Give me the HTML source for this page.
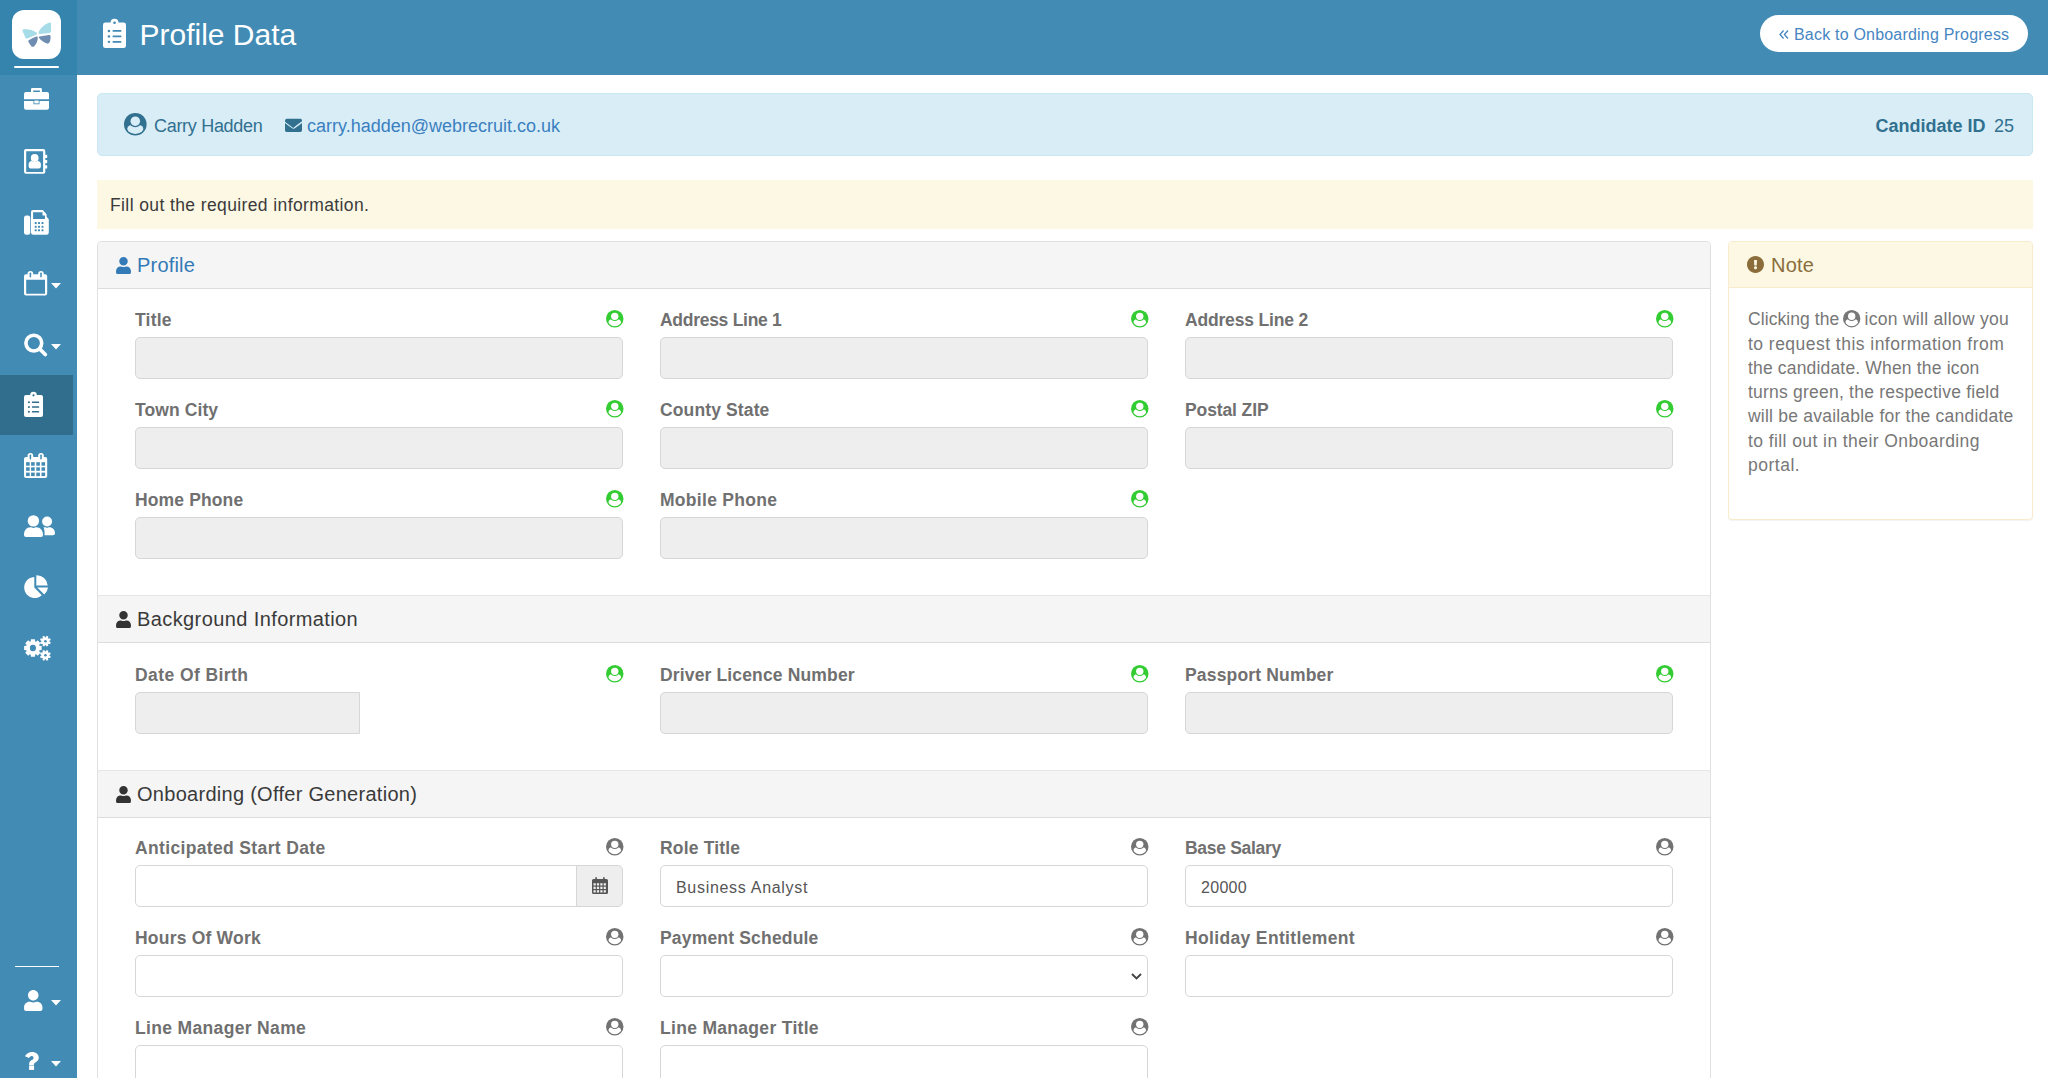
<!DOCTYPE html>
<html><head><meta charset="utf-8">
<style>
html,body{margin:0;padding:0;}
body{width:2048px;height:1078px;overflow:hidden;position:relative;background:#fff;font-family:"Liberation Sans",sans-serif;}
.t{position:absolute;white-space:nowrap;}
.b{position:absolute;box-sizing:border-box;}
.i{position:absolute;overflow:visible;}
</style></head><body>
<div class="b" style="left:0px;top:0px;width:77px;height:1078px;background:#428bb4;"></div>
<div class="b" style="left:0px;top:0px;width:77px;height:75px;background:#3584ae;"></div>
<div class="b" style="left:12px;top:10px;width:49px;height:49px;background:#fff;border-radius:12px;"></div>
<svg class="i" style="left:12px;top:10px;width:49px;height:49px;" viewBox="0 0 49 49"><path d="M11 19.5 C14 18.5 21 19.5 24.5 22.5 C25.5 23.5 25 24.5 23.5 25 L16 28.3 C14.5 29 13.5 28.5 13 27 C12.5 24.5 11 22.5 10.5 21 C10.3 20.2 10.5 19.7 11 19.5Z" fill="#a6dbe8"/><path d="M37.5 12.5 C38.5 12.3 39 13 39 14 C38.8 17 39.5 19.5 39 21.5 C38.8 22.5 38.2 22.8 37.2 22.9 L27.8 23.9 C26.8 24 26.3 23.3 26.6 22.3 C28.5 17.5 33 14 37.5 12.5Z" fill="#a6dbe8"/><path d="M27.5 26.4 L37 24.9 C38 24.8 38.6 25.4 38.6 26.4 C38.6 28.5 38.4 30.5 37.8 31.8 C37.2 33 36.3 33.8 35.2 33.6 C31.5 32.5 28.5 30 27 27.8 C26.6 27 26.8 26.5 27.5 26.4Z" fill="#6f8db1"/><path d="M24.5 26.5 C25.2 26.3 25.8 26.8 25.8 27.6 C25.8 31 24.3 34.5 22.2 36.2 C21.3 37 20 37 19.3 36.2 C18 34.5 17 33 16.4 31.8 C16.1 31 16.4 30.3 17.2 29.9 C19.5 28.5 22 27.3 24.5 26.5Z" fill="#6f8db1"/></svg>
<div class="b" style="left:14px;top:66px;width:45px;height:2px;background:#fff;border-radius:1px;"></div>
<svg class="i" style="left:24px;top:88px;width:25px;height:22px;" viewBox="0 0 25 22"><path d="M8.2 0H16.7A1.2 1.2 0 0 1 17.9 1.2V3.9H23A2 2 0 0 1 25 5.9V11.3H0V5.9A2 2 0 0 1 2 3.9H7V1.2A1.2 1.2 0 0 1 8.2 0ZM9.2 2.6V3.9H15.9V2.6Z" fill="#ffffff"/><path d="M0 13H9.5V16.2H15.5V13H25V19.7A2 2 0 0 1 23 21.7H2A2 2 0 0 1 0 19.7Z" fill="#ffffff"/><rect x="10.3" y="12.6" width="4.4" height="2.8" fill="#ffffff"/></svg>
<svg class="i" style="left:24px;top:149px;width:23px;height:25px;" viewBox="0 0 23 25"><path d="M2 0H19.3a2 2 0 0 1 2 2V22.7a2 2 0 0 1-2 2H2a2 2 0 0 1-2-2V2a2 2 0 0 1 2-2ZM2.2 2.3V22.9H19.1V2.3Z" fill="#ffffff" fill-rule="evenodd"/><rect x="20.5" y="5.8" width="2.7" height="3.2" rx="0.6" fill="#ffffff"/><rect x="20.5" y="11" width="2.7" height="3.2" rx="0.6" fill="#ffffff"/><rect x="20.5" y="16.2" width="2.7" height="3.4" rx="0.6" fill="#ffffff"/><circle cx="10.7" cy="9" r="3.9" fill="#ffffff"/><path d="M4.6 17.3V15.3C4.6 13.2 6 11.9 7.8 11.9C8.6 12.6 9.6 13 10.7 13C11.8 13 12.8 12.6 13.6 11.9C15.5 11.9 16.9 13.2 16.9 15.3V17.3A2.2 2.2 0 0 1 14.7 19.5H6.8A2.2 2.2 0 0 1 4.6 17.3Z" fill="#ffffff"/></svg>
<svg class="i" style="left:24px;top:210px;width:25px;height:25px;" viewBox="0 0 25 25"><rect x="0" y="5.5" width="6.3" height="19.3" rx="2.4" fill="#ffffff"/><path d="M9 0H18.8L22.6 4.3V6.5L23.8 8.3A1.5 1.5 0 0 1 24.8 9.7V22.5a2.3 2.3 0 0 1-2.3 2.3H9.3a2.3 2.3 0 0 1-2.3-2.3V2a2 2 0 0 1 2-2ZM9.1 2.3V8.9H20.9V5.6H18.5V2.3Z" fill="#ffffff" fill-rule="evenodd"/><rect x="10.7" y="12.1" width="2" height="2" rx="0.6" fill="#428bb4"/><rect x="14.0" y="12.1" width="2" height="2" rx="0.6" fill="#428bb4"/><rect x="17.5" y="12.1" width="2" height="2" rx="0.6" fill="#428bb4"/><rect x="10.7" y="15.8" width="2" height="2" rx="0.6" fill="#428bb4"/><rect x="14.0" y="15.8" width="2" height="2" rx="0.6" fill="#428bb4"/><rect x="17.5" y="15.8" width="2" height="2" rx="0.6" fill="#428bb4"/><rect x="10.7" y="19.3" width="2" height="2" rx="0.6" fill="#428bb4"/><rect x="14.0" y="19.3" width="2" height="2" rx="0.6" fill="#428bb4"/><rect x="17.5" y="19.3" width="2" height="2" rx="0.6" fill="#428bb4"/></svg>
<svg class="i" style="left:24px;top:271px;width:23px;height:25px;" viewBox="0 0 23 25"><path d="M2 3.2H21.2a2 2 0 0 1 2 2V22.6a2 2 0 0 1-2 2H2a2 2 0 0 1-2-2V5.2a2 2 0 0 1 2-2ZM2.2 8.8V22.7H21V8.8Z" fill="#ffffff" fill-rule="evenodd"/><rect x="3.6" y="0" width="5.6" height="7.2" rx="2.8" fill="#ffffff"/><rect x="14.2" y="0" width="5.6" height="7.2" rx="2.8" fill="#ffffff"/><rect x="5.65" y="1.5" width="1.5" height="5.1" rx="0.75" fill="#428bb4"/><rect x="16.25" y="1.5" width="1.5" height="5.1" rx="0.75" fill="#428bb4"/></svg>
<svg class="i" style="left:51px;top:283px;width:10px;height:6px;" viewBox="0 0 10 6"><path d="M0 0H10L5 5.5Z" fill="#fff"/></svg>
<svg class="i" style="left:24px;top:333px;width:24px;height:24px;" viewBox="0 0 24 24"><circle cx="9.8" cy="10.1" r="7.9" fill="none" stroke="#ffffff" stroke-width="3.6"/><path d="M15.6 15.9L21.3 21.5" stroke="#ffffff" stroke-width="3.8" stroke-linecap="round"/></svg>
<svg class="i" style="left:51px;top:344px;width:10px;height:6px;" viewBox="0 0 10 6"><path d="M0 0H10L5 5.5Z" fill="#fff"/></svg>
<div class="b" style="left:0px;top:375px;width:73px;height:60px;background:#316e8e;"></div>
<svg class="i" style="left:24px;top:392px;width:19px;height:25px;" viewBox="0 0 19 25"><path d="M2 3.1H6.2A3.3 3.3 0 0 1 12.8 3.1H17a2 2 0 0 1 2 2V23a2 2 0 0 1-2 2H2a2 2 0 0 1-2-2V5.1a2 2 0 0 1 2-2Z" fill="#ffffff"/><circle cx="9.5" cy="3.3" r="1.1" fill="#316e8e"/><circle cx="4.9" cy="10.3" r="1.05" fill="#316e8e"/><rect x="7.9" y="9.55" width="7.3" height="1.5" rx="0.5" fill="#316e8e"/><circle cx="4.9" cy="15.0" r="1.05" fill="#316e8e"/><rect x="7.9" y="14.25" width="7.3" height="1.5" rx="0.5" fill="#316e8e"/><circle cx="4.9" cy="19.700000000000003" r="1.05" fill="#316e8e"/><rect x="7.9" y="18.950000000000003" width="7.3" height="1.5" rx="0.5" fill="#316e8e"/></svg>
<svg class="i" style="left:24px;top:453px;width:23px;height:25px;" viewBox="0 0 23 25"><path d="M2 3.9H21.2a2 2 0 0 1 2 2V23a2 2 0 0 1-2 2H2a2 2 0 0 1-2-2V5.9a2 2 0 0 1 2-2Z" fill="#ffffff"/><rect x="2.1" y="9.2" width="3.6" height="3.5" fill="#428bb4"/><rect x="7.1" y="9.2" width="3.6" height="3.5" fill="#428bb4"/><rect x="12.3" y="9.2" width="3.6" height="3.5" fill="#428bb4"/><rect x="17.5" y="9.2" width="3.6" height="3.5" fill="#428bb4"/><rect x="2.1" y="14.3" width="3.6" height="3.5" fill="#428bb4"/><rect x="7.1" y="14.3" width="3.6" height="3.5" fill="#428bb4"/><rect x="12.3" y="14.3" width="3.6" height="3.5" fill="#428bb4"/><rect x="17.5" y="14.3" width="3.6" height="3.5" fill="#428bb4"/><rect x="2.1" y="19.6" width="3.6" height="3.5" fill="#428bb4"/><rect x="7.1" y="19.6" width="3.6" height="3.5" fill="#428bb4"/><rect x="12.3" y="19.6" width="3.6" height="3.5" fill="#428bb4"/><rect x="17.5" y="19.6" width="3.6" height="3.5" fill="#428bb4"/><rect x="3.6" y="0" width="5.6" height="7.2" rx="2.8" fill="#ffffff"/><rect x="14.2" y="0" width="5.6" height="7.2" rx="2.8" fill="#ffffff"/><rect x="5.65" y="1.5" width="1.5" height="5.1" rx="0.75" fill="#428bb4"/><rect x="16.25" y="1.5" width="1.5" height="5.1" rx="0.75" fill="#428bb4"/></svg>
<svg class="i" style="left:24px;top:515px;width:31px;height:22px;" viewBox="0 0 31 22"><circle cx="9.4" cy="5.9" r="5.7" fill="#ffffff"/><path d="M0 19.9C0 15.5 2.5 12.3 6.5 12.3C7.5 12.3 8 13 9.4 13C10.8 13 11.3 12.3 12.3 12.3C16.3 12.3 19 15.5 19 19.9A2 2 0 0 1 17 21.9H2A2 2 0 0 1 0 19.9Z" fill="#ffffff"/><circle cx="23.1" cy="6.5" r="5.0" fill="#ffffff"/><path d="M19.5 12.5C20 12.3 20.5 12.3 21 12.3C21.8 12.3 22.2 12.8 23.1 12.8C24 12.8 24.4 12.3 25.2 12.3C28.5 12.3 31 14.8 31 18.2A2 2 0 0 1 29 20.2H20.4C20.6 19.5 20.6 18.5 20.6 18C20.6 15.8 20.3 13.8 19.5 12.5Z" fill="#ffffff"/></svg>
<svg class="i" style="left:24px;top:575px;width:24px;height:24px;" viewBox="0 0 24 24"><path d="M10.3 2V12.5L17.8 20.2A10.5 10.5 0 1 1 10.3 2Z" fill="#ffffff"/><path d="M12.3 0.3A11 11 0 0 1 23.7 10.5H12.3Z" fill="#ffffff"/><path d="M13.2 12.5H24A11 11 0 0 1 20.3 19.6Z" fill="#ffffff"/></svg>
<svg class="i" style="left:24px;top:636px;width:28px;height:25px;" viewBox="0 0 28 25"><polygon points="6.66,5.47 6.85,3.24 10.95,3.24 11.14,5.47 11.93,5.80 13.65,4.35 16.55,7.25 15.10,8.97 15.43,9.76 17.66,9.95 17.66,14.05 15.43,14.24 15.10,15.03 16.55,16.75 13.65,19.65 11.93,18.20 11.14,18.53 10.95,20.76 6.85,20.76 6.66,18.53 5.87,18.20 4.15,19.65 1.25,16.75 2.70,15.03 2.37,14.24 0.14,14.05 0.14,9.95 2.37,9.76 2.70,8.97 1.25,7.25 4.15,4.35 5.87,5.80" fill="#ffffff"/><ellipse cx="8.9" cy="12.0" rx="3.05" ry="3.3" fill="#428bb4"/><polygon points="21.88,1.13 22.56,-0.18 24.38,0.58 23.94,1.98 24.62,2.66 26.02,2.22 26.78,4.04 25.47,4.72 25.47,5.68 26.78,6.36 26.02,8.18 24.62,7.74 23.94,8.42 24.38,9.82 22.56,10.58 21.88,9.27 20.92,9.27 20.24,10.58 18.42,9.82 18.86,8.42 18.18,7.74 16.78,8.18 16.02,6.36 17.33,5.68 17.33,4.72 16.02,4.04 16.78,2.22 18.18,2.66 18.86,1.98 18.42,0.58 20.24,-0.18 20.92,1.13" fill="#ffffff"/><ellipse cx="21.4" cy="5.2" rx="1.3" ry="1.3" fill="#428bb4"/><polygon points="21.88,15.23 22.56,13.92 24.38,14.68 23.94,16.08 24.62,16.76 26.02,16.32 26.78,18.14 25.47,18.82 25.47,19.78 26.78,20.46 26.02,22.28 24.62,21.84 23.94,22.52 24.38,23.92 22.56,24.68 21.88,23.37 20.92,23.37 20.24,24.68 18.42,23.92 18.86,22.52 18.18,21.84 16.78,22.28 16.02,20.46 17.33,19.78 17.33,18.82 16.02,18.14 16.78,16.32 18.18,16.76 18.86,16.08 18.42,14.68 20.24,13.92 20.92,15.23" fill="#ffffff"/><ellipse cx="21.4" cy="19.3" rx="1.3" ry="1.3" fill="#428bb4"/></svg>
<div class="b" style="left:14.5px;top:966px;width:44px;height:1px;background:#fff;"></div>
<svg class="i" style="left:24px;top:990px;width:18.5px;height:21px;" viewBox="0 0 448 512"><path d="M224 256c70.7 0 128-57.3 128-128S294.7 0 224 0 96 57.3 96 128s57.3 128 128 128zm89.6 32h-16.7c-22.2 10.2-46.9 16-72.9 16s-50.6-5.8-72.9-16h-16.7C60.2 288 0 348.2 0 422.4V464c0 26.5 21.5 48 48 48h352c26.5 0 48-21.5 48-48v-41.6c0-74.2-60.2-134.4-134.4-134.4z" fill="#ffffff"/></svg>
<svg class="i" style="left:51px;top:1000px;width:10px;height:6px;" viewBox="0 0 10 6"><path d="M0 0H10L5 5.5Z" fill="#fff"/></svg>
<svg class="i" style="left:25px;top:1052px;width:14px;height:18px;" viewBox="0 0 14 18"><path d="M0 4.3C1.3 1.6 3.8 0 7.2 0C10.9 0 13.8 2.3 13.8 5.6C13.8 8.2 12.2 9.5 10.4 10.6C9.4 11.2 8.9 12 8.9 12.8V13.3H4.1V12.5C4.1 10.2 5.2 9 6.6 8.1C7.9 7.3 8.5 6.8 8.5 5.9C8.5 4.9 7.9 4.1 6.8 4.1C5.6 4.1 4.9 4.8 4.1 5.9Z" fill="#ffffff"/><rect x="4.1" y="13.6" width="5" height="4.3" fill="#ffffff"/></svg>
<svg class="i" style="left:51px;top:1061px;width:10px;height:6px;" viewBox="0 0 10 6"><path d="M0 0H10L5 5.5Z" fill="#fff"/></svg>
<div class="b" style="left:77px;top:0px;width:1971px;height:75px;background:#428bb4;"></div>
<svg class="i" style="left:103px;top:19px;width:23px;height:29px;" viewBox="0 0 19 25" preserveAspectRatio="none"><path d="M2 3.1H6.2A3.3 3.3 0 0 1 12.8 3.1H17a2 2 0 0 1 2 2V23a2 2 0 0 1-2 2H2a2 2 0 0 1-2-2V5.1a2 2 0 0 1 2-2Z" fill="#ffffff"/><circle cx="9.5" cy="3.3" r="1.1" fill="#428bb4"/><circle cx="4.9" cy="10.3" r="1.05" fill="#428bb4"/><rect x="7.9" y="9.55" width="7.3" height="1.5" rx="0.5" fill="#428bb4"/><circle cx="4.9" cy="15.0" r="1.05" fill="#428bb4"/><rect x="7.9" y="14.25" width="7.3" height="1.5" rx="0.5" fill="#428bb4"/><circle cx="4.9" cy="19.700000000000003" r="1.05" fill="#428bb4"/><rect x="7.9" y="18.950000000000003" width="7.3" height="1.5" rx="0.5" fill="#428bb4"/></svg>
<div class="t " style="left:139.5px;top:16.60px;font-size:30px;line-height:36px;color:#fff;">Profile Data</div>
<div class="b" style="left:1760px;top:15px;width:268px;height:37px;background:#fff;border-radius:19px;"></div>
<svg class="i" style="left:1779px;top:30px;width:10px;height:9px;" viewBox="0 0 10 9"><path d="M4.6 0.5L1 4.5L4.6 8.5M9 0.5L5.4 4.5L9 8.5" fill="none" stroke="#4686c2" stroke-width="1.3"/></svg>
<div class="t " style="left:1794px;top:24.96px;font-size:16px;line-height:19px;color:#4686c2;letter-spacing:0.2px;">Back to Onboarding Progress</div>
<div class="b" style="left:97px;top:93px;width:1936px;height:63px;background:#d9edf7;border:1px solid #c9e8f2;border-radius:5px;"></div>
<svg class="i" style="left:123.7px;top:112.7px;width:22.6px;height:22.6px;" viewBox="0 0 100 100"><clipPath id="uc1"><circle cx="50" cy="50" r="43"/></clipPath><circle cx="50" cy="50" r="50" fill="#31708f"/><rect x="14" y="53" width="72" height="50" rx="20" fill="#d9edf7" clip-path="url(#uc1)"/><circle cx="50" cy="36" r="27.5" fill="#31708f"/><circle cx="50" cy="36" r="21" fill="#d9edf7"/></svg>
<div class="t " style="left:154px;top:114.96px;font-size:18px;line-height:22px;color:#31708f;letter-spacing:-0.3px;">Carry Hadden</div>
<svg class="i" style="left:285px;top:119px;width:17px;height:13px;" viewBox="0 64 512 384"><path d="M502.3 190.8c3.9-3.1 9.7-.2 9.7 4.7V400c0 26.5-21.5 48-48 48H48c-26.5 0-48-21.5-48-48V195.6c0-5 5.7-7.8 9.7-4.7 22.4 17.4 52.1 39.5 154.1 113.6 21.1 15.4 56.7 47.8 92.2 47.6 35.7.3 72-32.8 92.3-47.6 102-74.1 131.6-96.3 154-113.7zM256 320c23.2.4 56.6-42.4 72.4-53.8 132.7-96.3 142.8-104.7 173.4-128.7 5.8-4.5 9.2-11.5 9.2-18.9v-19c0-26.5-21.5-48-48-48H48C21.5 64 0 85.5 0 112v19c0 7.4 3.4 14.3 9.2 18.9 30.6 23.9 40.7 32.4 173.4 128.7 15.8 11.4 49.2 54.2 72.4 53.8z" fill="#31708f"/></svg>
<div class="t " style="left:307px;top:114.96px;font-size:18px;line-height:22px;color:#3a80bf;">carry.hadden@webrecruit.co.uk</div>
<div class="t" style="right:62.5px;top:114.96px;font-size:18px;line-height:22px;color:#31708f;font-weight:700;">Candidate ID</div>
<div class="t" style="right:34px;top:114.96px;font-size:18px;line-height:22px;color:#31708f;">25</div>
<div class="b" style="left:97px;top:180px;width:1936px;height:49px;background:#fcf8e3;"></div>
<div class="t " style="left:110px;top:194.64px;font-size:17.5px;line-height:21px;color:#3b3b3b;letter-spacing:0.39px;">Fill out the required information.</div>
<div class="b" style="left:97px;top:241px;width:1614px;height:900px;border:1px solid #e0e0e0;border-radius:4px;background:#fff;"></div>
<div class="b" style="left:98px;top:242px;width:1612px;height:47px;background:#f5f5f5;border-bottom:1px solid #dddddd;border-radius:3px 3px 0 0;"></div>
<svg class="i" style="left:116px;top:257px;width:15px;height:17px;" viewBox="0 0 448 512"><path d="M224 256c70.7 0 128-57.3 128-128S294.7 0 224 0 96 57.3 96 128s57.3 128 128 128zm89.6 32h-16.7c-22.2 10.2-46.9 16-72.9 16s-50.6-5.8-72.9-16h-16.7C60.2 288 0 348.2 0 422.4V464c0 26.5 21.5 48 48 48h352c26.5 0 48-21.5 48-48v-41.6c0-74.2-60.2-134.4-134.4-134.4z" fill="#337ab7"/></svg>
<div class="t " style="left:137px;top:253.27px;font-size:20px;line-height:24px;color:#337ab7;letter-spacing:0.2px;">Profile</div>
<div class="b" style="left:97px;top:595px;width:1614px;height:48px;background:#f5f5f5;border-bottom:1px solid #dddddd;border-top:1px solid #e6e6e6;border-radius:3px 3px 0 0;border-left:1px solid #e3e3e3;border-right:1px solid #e3e3e3;"></div>
<svg class="i" style="left:116px;top:611px;width:15px;height:17px;" viewBox="0 0 448 512"><path d="M224 256c70.7 0 128-57.3 128-128S294.7 0 224 0 96 57.3 96 128s57.3 128 128 128zm89.6 32h-16.7c-22.2 10.2-46.9 16-72.9 16s-50.6-5.8-72.9-16h-16.7C60.2 288 0 348.2 0 422.4V464c0 26.5 21.5 48 48 48h352c26.5 0 48-21.5 48-48v-41.6c0-74.2-60.2-134.4-134.4-134.4z" fill="#333333"/></svg>
<div class="t " style="left:137px;top:607.27px;font-size:20px;line-height:24px;color:#3a3a3a;letter-spacing:0.4px;">Background Information</div>
<div class="b" style="left:97px;top:770px;width:1614px;height:48px;background:#f5f5f5;border-bottom:1px solid #dddddd;border-top:1px solid #e6e6e6;border-radius:3px 3px 0 0;border-left:1px solid #e3e3e3;border-right:1px solid #e3e3e3;"></div>
<svg class="i" style="left:116px;top:786px;width:15px;height:17px;" viewBox="0 0 448 512"><path d="M224 256c70.7 0 128-57.3 128-128S294.7 0 224 0 96 57.3 96 128s57.3 128 128 128zm89.6 32h-16.7c-22.2 10.2-46.9 16-72.9 16s-50.6-5.8-72.9-16h-16.7C60.2 288 0 348.2 0 422.4V464c0 26.5 21.5 48 48 48h352c26.5 0 48-21.5 48-48v-41.6c0-74.2-60.2-134.4-134.4-134.4z" fill="#333333"/></svg>
<div class="t " style="left:137px;top:782.27px;font-size:20px;line-height:24px;color:#3a3a3a;letter-spacing:0.28px;">Onboarding (Offer Generation)</div>
<div class="t " style="left:135px;top:310.44px;font-size:17.5px;line-height:21px;color:#707070;font-weight:700;letter-spacing:0.2px;">Title</div>
<svg class="i" style="left:605.85px;top:310.05px;width:17.5px;height:17.5px;" viewBox="0 0 100 100"><clipPath id="uc2"><circle cx="50" cy="50" r="43"/></clipPath><circle cx="50" cy="50" r="50" fill="#33cc33"/><rect x="14" y="53" width="72" height="50" rx="20" fill="#fff" clip-path="url(#uc2)"/><circle cx="50" cy="36" r="27.5" fill="#33cc33"/><circle cx="50" cy="36" r="21" fill="#fff"/></svg>
<div class="b" style="left:135px;top:337px;width:488px;height:42px;background:#eeeeee;border:1px solid #d6d6d6;border-radius:5px;"></div>
<div class="t " style="left:660px;top:310.44px;font-size:17.5px;line-height:21px;color:#707070;font-weight:700;letter-spacing:-0.28px;">Address Line 1</div>
<svg class="i" style="left:1130.85px;top:310.05px;width:17.5px;height:17.5px;" viewBox="0 0 100 100"><clipPath id="uc3"><circle cx="50" cy="50" r="43"/></clipPath><circle cx="50" cy="50" r="50" fill="#33cc33"/><rect x="14" y="53" width="72" height="50" rx="20" fill="#fff" clip-path="url(#uc3)"/><circle cx="50" cy="36" r="27.5" fill="#33cc33"/><circle cx="50" cy="36" r="21" fill="#fff"/></svg>
<div class="b" style="left:660px;top:337px;width:488px;height:42px;background:#eeeeee;border:1px solid #d6d6d6;border-radius:5px;"></div>
<div class="t " style="left:1185px;top:310.44px;font-size:17.5px;line-height:21px;color:#707070;font-weight:700;letter-spacing:-0.18px;">Address Line 2</div>
<svg class="i" style="left:1655.85px;top:310.05px;width:17.5px;height:17.5px;" viewBox="0 0 100 100"><clipPath id="uc4"><circle cx="50" cy="50" r="43"/></clipPath><circle cx="50" cy="50" r="50" fill="#33cc33"/><rect x="14" y="53" width="72" height="50" rx="20" fill="#fff" clip-path="url(#uc4)"/><circle cx="50" cy="36" r="27.5" fill="#33cc33"/><circle cx="50" cy="36" r="21" fill="#fff"/></svg>
<div class="b" style="left:1185px;top:337px;width:488px;height:42px;background:#eeeeee;border:1px solid #d6d6d6;border-radius:5px;"></div>
<div class="t " style="left:135px;top:400.44px;font-size:17.5px;line-height:21px;color:#707070;font-weight:700;letter-spacing:0.1px;">Town City</div>
<svg class="i" style="left:605.85px;top:400.05px;width:17.5px;height:17.5px;" viewBox="0 0 100 100"><clipPath id="uc5"><circle cx="50" cy="50" r="43"/></clipPath><circle cx="50" cy="50" r="50" fill="#33cc33"/><rect x="14" y="53" width="72" height="50" rx="20" fill="#fff" clip-path="url(#uc5)"/><circle cx="50" cy="36" r="27.5" fill="#33cc33"/><circle cx="50" cy="36" r="21" fill="#fff"/></svg>
<div class="b" style="left:135px;top:427px;width:488px;height:42px;background:#eeeeee;border:1px solid #d6d6d6;border-radius:5px;"></div>
<div class="t " style="left:660px;top:400.44px;font-size:17.5px;line-height:21px;color:#707070;font-weight:700;letter-spacing:0.13px;">County State</div>
<svg class="i" style="left:1130.85px;top:400.05px;width:17.5px;height:17.5px;" viewBox="0 0 100 100"><clipPath id="uc6"><circle cx="50" cy="50" r="43"/></clipPath><circle cx="50" cy="50" r="50" fill="#33cc33"/><rect x="14" y="53" width="72" height="50" rx="20" fill="#fff" clip-path="url(#uc6)"/><circle cx="50" cy="36" r="27.5" fill="#33cc33"/><circle cx="50" cy="36" r="21" fill="#fff"/></svg>
<div class="b" style="left:660px;top:427px;width:488px;height:42px;background:#eeeeee;border:1px solid #d6d6d6;border-radius:5px;"></div>
<div class="t " style="left:1185px;top:400.44px;font-size:17.5px;line-height:21px;color:#707070;font-weight:700;letter-spacing:-0.11px;">Postal ZIP</div>
<svg class="i" style="left:1655.85px;top:400.05px;width:17.5px;height:17.5px;" viewBox="0 0 100 100"><clipPath id="uc7"><circle cx="50" cy="50" r="43"/></clipPath><circle cx="50" cy="50" r="50" fill="#33cc33"/><rect x="14" y="53" width="72" height="50" rx="20" fill="#fff" clip-path="url(#uc7)"/><circle cx="50" cy="36" r="27.5" fill="#33cc33"/><circle cx="50" cy="36" r="21" fill="#fff"/></svg>
<div class="b" style="left:1185px;top:427px;width:488px;height:42px;background:#eeeeee;border:1px solid #d6d6d6;border-radius:5px;"></div>
<div class="t " style="left:135px;top:490.44px;font-size:17.5px;line-height:21px;color:#707070;font-weight:700;letter-spacing:0.13px;">Home Phone</div>
<svg class="i" style="left:605.85px;top:490.05px;width:17.5px;height:17.5px;" viewBox="0 0 100 100"><clipPath id="uc8"><circle cx="50" cy="50" r="43"/></clipPath><circle cx="50" cy="50" r="50" fill="#33cc33"/><rect x="14" y="53" width="72" height="50" rx="20" fill="#fff" clip-path="url(#uc8)"/><circle cx="50" cy="36" r="27.5" fill="#33cc33"/><circle cx="50" cy="36" r="21" fill="#fff"/></svg>
<div class="b" style="left:135px;top:517px;width:488px;height:42px;background:#eeeeee;border:1px solid #d6d6d6;border-radius:5px;"></div>
<div class="t " style="left:660px;top:490.44px;font-size:17.5px;line-height:21px;color:#707070;font-weight:700;letter-spacing:0.29px;">Mobile Phone</div>
<svg class="i" style="left:1130.85px;top:490.05px;width:17.5px;height:17.5px;" viewBox="0 0 100 100"><clipPath id="uc9"><circle cx="50" cy="50" r="43"/></clipPath><circle cx="50" cy="50" r="50" fill="#33cc33"/><rect x="14" y="53" width="72" height="50" rx="20" fill="#fff" clip-path="url(#uc9)"/><circle cx="50" cy="36" r="27.5" fill="#33cc33"/><circle cx="50" cy="36" r="21" fill="#fff"/></svg>
<div class="b" style="left:660px;top:517px;width:488px;height:42px;background:#eeeeee;border:1px solid #d6d6d6;border-radius:5px;"></div>
<div class="t " style="left:135px;top:665.44px;font-size:17.5px;line-height:21px;color:#707070;font-weight:700;letter-spacing:0.42px;">Date Of Birth</div>
<svg class="i" style="left:605.85px;top:665.05px;width:17.5px;height:17.5px;" viewBox="0 0 100 100"><clipPath id="uc10"><circle cx="50" cy="50" r="43"/></clipPath><circle cx="50" cy="50" r="50" fill="#33cc33"/><rect x="14" y="53" width="72" height="50" rx="20" fill="#fff" clip-path="url(#uc10)"/><circle cx="50" cy="36" r="27.5" fill="#33cc33"/><circle cx="50" cy="36" r="21" fill="#fff"/></svg>
<div class="b" style="left:135px;top:692px;width:225px;height:42px;background:#eeeeee;border:1px solid #d6d6d6;border-radius:5px 0 0 5px;"></div>
<div class="t " style="left:660px;top:665.44px;font-size:17.5px;line-height:21px;color:#707070;font-weight:700;letter-spacing:0.15px;">Driver Licence Number</div>
<svg class="i" style="left:1130.85px;top:665.05px;width:17.5px;height:17.5px;" viewBox="0 0 100 100"><clipPath id="uc11"><circle cx="50" cy="50" r="43"/></clipPath><circle cx="50" cy="50" r="50" fill="#33cc33"/><rect x="14" y="53" width="72" height="50" rx="20" fill="#fff" clip-path="url(#uc11)"/><circle cx="50" cy="36" r="27.5" fill="#33cc33"/><circle cx="50" cy="36" r="21" fill="#fff"/></svg>
<div class="b" style="left:660px;top:692px;width:488px;height:42px;background:#eeeeee;border:1px solid #d6d6d6;border-radius:5px;"></div>
<div class="t " style="left:1185px;top:665.44px;font-size:17.5px;line-height:21px;color:#707070;font-weight:700;letter-spacing:0.17px;">Passport Number</div>
<svg class="i" style="left:1655.85px;top:665.05px;width:17.5px;height:17.5px;" viewBox="0 0 100 100"><clipPath id="uc12"><circle cx="50" cy="50" r="43"/></clipPath><circle cx="50" cy="50" r="50" fill="#33cc33"/><rect x="14" y="53" width="72" height="50" rx="20" fill="#fff" clip-path="url(#uc12)"/><circle cx="50" cy="36" r="27.5" fill="#33cc33"/><circle cx="50" cy="36" r="21" fill="#fff"/></svg>
<div class="b" style="left:1185px;top:692px;width:488px;height:42px;background:#eeeeee;border:1px solid #d6d6d6;border-radius:5px;"></div>
<div class="t " style="left:135px;top:838.44px;font-size:17.5px;line-height:21px;color:#707070;font-weight:700;letter-spacing:0.35px;">Anticipated Start Date</div>
<svg class="i" style="left:605.85px;top:838.05px;width:17.5px;height:17.5px;" viewBox="0 0 100 100"><clipPath id="uc13"><circle cx="50" cy="50" r="43"/></clipPath><circle cx="50" cy="50" r="50" fill="#727272"/><rect x="14" y="53" width="72" height="50" rx="20" fill="#fff" clip-path="url(#uc13)"/><circle cx="50" cy="36" r="27.5" fill="#727272"/><circle cx="50" cy="36" r="21" fill="#fff"/></svg>
<div class="b" style="left:135px;top:865px;width:442px;height:42px;background:#fff;border:1px solid #d6d6d6;border-radius:5px 0 0 5px;"></div>
<div class="b" style="left:576px;top:865px;width:47px;height:42px;background:#eeeeee;border:1px solid #d6d6d6;border-radius:0 5px 5px 0;"></div>
<svg class="i" style="left:592px;top:877px;width:16px;height:17px;" viewBox="0 0 16 17"><path d="M1.5 2H14.5A1.5 1.5 0 0 1 16 3.5V15.5A1.5 1.5 0 0 1 14.5 17H1.5A1.5 1.5 0 0 1 0 15.5V3.5A1.5 1.5 0 0 1 1.5 2Z" fill="#555"/><rect x="1.5" y="6.2" width="2.2" height="2.3" fill="#eee"/><rect x="4.9" y="6.2" width="2.2" height="2.3" fill="#eee"/><rect x="8.3" y="6.2" width="2.2" height="2.3" fill="#eee"/><rect x="11.7" y="6.2" width="2.2" height="2.3" fill="#eee"/><rect x="1.5" y="9.7" width="2.2" height="2.3" fill="#eee"/><rect x="4.9" y="9.7" width="2.2" height="2.3" fill="#eee"/><rect x="8.3" y="9.7" width="2.2" height="2.3" fill="#eee"/><rect x="11.7" y="9.7" width="2.2" height="2.3" fill="#eee"/><rect x="1.5" y="13.2" width="2.2" height="2.3" fill="#eee"/><rect x="4.9" y="13.2" width="2.2" height="2.3" fill="#eee"/><rect x="8.3" y="13.2" width="2.2" height="2.3" fill="#eee"/><rect x="11.7" y="13.2" width="2.2" height="2.3" fill="#eee"/><rect x="3.3" y="0" width="1.6" height="4.2" rx="0.8" fill="#555"/><rect x="11.1" y="0" width="1.6" height="4.2" rx="0.8" fill="#555"/></svg>
<div class="t " style="left:660px;top:838.44px;font-size:17.5px;line-height:21px;color:#707070;font-weight:700;letter-spacing:0.18px;">Role Title</div>
<svg class="i" style="left:1130.85px;top:838.05px;width:17.5px;height:17.5px;" viewBox="0 0 100 100"><clipPath id="uc14"><circle cx="50" cy="50" r="43"/></clipPath><circle cx="50" cy="50" r="50" fill="#727272"/><rect x="14" y="53" width="72" height="50" rx="20" fill="#fff" clip-path="url(#uc14)"/><circle cx="50" cy="36" r="27.5" fill="#727272"/><circle cx="50" cy="36" r="21" fill="#fff"/></svg>
<div class="b" style="left:660px;top:865px;width:488px;height:42px;background:#fff;border:1px solid #d6d6d6;border-radius:5px;"></div>
<div class="t " style="left:676px;top:877.96px;font-size:16px;line-height:19px;color:#555555;letter-spacing:0.7px;">Business Analyst</div>
<div class="t " style="left:1185px;top:838.44px;font-size:17.5px;line-height:21px;color:#707070;font-weight:700;letter-spacing:-0.3px;">Base Salary</div>
<svg class="i" style="left:1655.85px;top:838.05px;width:17.5px;height:17.5px;" viewBox="0 0 100 100"><clipPath id="uc15"><circle cx="50" cy="50" r="43"/></clipPath><circle cx="50" cy="50" r="50" fill="#727272"/><rect x="14" y="53" width="72" height="50" rx="20" fill="#fff" clip-path="url(#uc15)"/><circle cx="50" cy="36" r="27.5" fill="#727272"/><circle cx="50" cy="36" r="21" fill="#fff"/></svg>
<div class="b" style="left:1185px;top:865px;width:488px;height:42px;background:#fff;border:1px solid #d6d6d6;border-radius:5px;"></div>
<div class="t " style="left:1201px;top:877.96px;font-size:16px;line-height:19px;color:#555555;letter-spacing:0.3px;">20000</div>
<div class="t " style="left:135px;top:928.44px;font-size:17.5px;line-height:21px;color:#707070;font-weight:700;letter-spacing:0.21px;">Hours Of Work</div>
<svg class="i" style="left:605.85px;top:928.05px;width:17.5px;height:17.5px;" viewBox="0 0 100 100"><clipPath id="uc16"><circle cx="50" cy="50" r="43"/></clipPath><circle cx="50" cy="50" r="50" fill="#727272"/><rect x="14" y="53" width="72" height="50" rx="20" fill="#fff" clip-path="url(#uc16)"/><circle cx="50" cy="36" r="27.5" fill="#727272"/><circle cx="50" cy="36" r="21" fill="#fff"/></svg>
<div class="b" style="left:135px;top:955px;width:488px;height:42px;background:#fff;border:1px solid #d6d6d6;border-radius:5px;"></div>
<div class="t " style="left:660px;top:928.44px;font-size:17.5px;line-height:21px;color:#707070;font-weight:700;letter-spacing:0.18px;">Payment Schedule</div>
<svg class="i" style="left:1130.85px;top:928.05px;width:17.5px;height:17.5px;" viewBox="0 0 100 100"><clipPath id="uc17"><circle cx="50" cy="50" r="43"/></clipPath><circle cx="50" cy="50" r="50" fill="#727272"/><rect x="14" y="53" width="72" height="50" rx="20" fill="#fff" clip-path="url(#uc17)"/><circle cx="50" cy="36" r="27.5" fill="#727272"/><circle cx="50" cy="36" r="21" fill="#fff"/></svg>
<div class="b" style="left:660px;top:955px;width:488px;height:42px;background:#fff;border:1px solid #d6d6d6;border-radius:5px;"></div>
<svg class="i" style="left:1131px;top:972.5px;width:11px;height:7px;" viewBox="0 0 11 7"><path d="M1 1L5.5 5.5L10 1" fill="none" stroke="#444" stroke-width="1.9"/></svg>
<div class="t " style="left:1185px;top:928.44px;font-size:17.5px;line-height:21px;color:#707070;font-weight:700;letter-spacing:0.35px;">Holiday Entitlement</div>
<svg class="i" style="left:1655.85px;top:928.05px;width:17.5px;height:17.5px;" viewBox="0 0 100 100"><clipPath id="uc18"><circle cx="50" cy="50" r="43"/></clipPath><circle cx="50" cy="50" r="50" fill="#727272"/><rect x="14" y="53" width="72" height="50" rx="20" fill="#fff" clip-path="url(#uc18)"/><circle cx="50" cy="36" r="27.5" fill="#727272"/><circle cx="50" cy="36" r="21" fill="#fff"/></svg>
<div class="b" style="left:1185px;top:955px;width:488px;height:42px;background:#fff;border:1px solid #d6d6d6;border-radius:5px;"></div>
<div class="t " style="left:135px;top:1018.44px;font-size:17.5px;line-height:21px;color:#707070;font-weight:700;letter-spacing:0.34px;">Line Manager Name</div>
<svg class="i" style="left:605.85px;top:1018.05px;width:17.5px;height:17.5px;" viewBox="0 0 100 100"><clipPath id="uc19"><circle cx="50" cy="50" r="43"/></clipPath><circle cx="50" cy="50" r="50" fill="#727272"/><rect x="14" y="53" width="72" height="50" rx="20" fill="#fff" clip-path="url(#uc19)"/><circle cx="50" cy="36" r="27.5" fill="#727272"/><circle cx="50" cy="36" r="21" fill="#fff"/></svg>
<div class="b" style="left:135px;top:1045px;width:488px;height:42px;background:#fff;border:1px solid #d6d6d6;border-radius:5px;"></div>
<div class="t " style="left:660px;top:1018.44px;font-size:17.5px;line-height:21px;color:#707070;font-weight:700;letter-spacing:0.31px;">Line Manager Title</div>
<svg class="i" style="left:1130.85px;top:1018.05px;width:17.5px;height:17.5px;" viewBox="0 0 100 100"><clipPath id="uc20"><circle cx="50" cy="50" r="43"/></clipPath><circle cx="50" cy="50" r="50" fill="#727272"/><rect x="14" y="53" width="72" height="50" rx="20" fill="#fff" clip-path="url(#uc20)"/><circle cx="50" cy="36" r="27.5" fill="#727272"/><circle cx="50" cy="36" r="21" fill="#fff"/></svg>
<div class="b" style="left:660px;top:1045px;width:488px;height:42px;background:#fff;border:1px solid #d6d6d6;border-radius:5px;"></div>
<div class="b" style="left:1728px;top:241px;width:305px;height:279px;border:1px solid #faebcc;border-radius:4px;background:#fff;box-shadow:0 1px 1px rgba(0,0,0,.05);"></div>
<div class="b" style="left:1729px;top:242px;width:303px;height:46px;background:#fcf8e3;border-bottom:1px solid #faebcc;border-radius:3px 3px 0 0;"></div>
<svg class="i" style="left:1747px;top:256px;width:17px;height:17px;" viewBox="8 8 496 496"><path d="M504 256c0 136.997-111.043 248-248 248S8 392.997 8 256C8 119.083 119.043 8 256 8s248 111.083 248 248zm-248 50c-25.405 0-46 20.595-46 46s20.595 46 46 46 46-20.595 46-46-20.595-46-46-46zm-43.673-165.346l7.418 136c.347 6.364 5.609 11.346 11.982 11.346h48.546c6.373 0 11.635-4.982 11.982-11.346l7.418-136c.375-6.874-5.098-12.654-11.982-12.654h-63.383c-6.884 0-12.356 5.78-11.981 12.654z" fill="#8a6d3b"/></svg>
<div class="t " style="left:1771px;top:253.07px;font-size:20px;line-height:24px;color:#8a6d3b;letter-spacing:0.2px;">Note</div>
<div class="t " style="left:1748px;top:309.24px;font-size:17.5px;line-height:21px;color:#777777;letter-spacing:0.08px;">Clicking the</div>
<svg class="i" style="left:1842.8px;top:309.8px;width:17.4px;height:17.4px;" viewBox="0 0 100 100"><clipPath id="uc21"><circle cx="50" cy="50" r="43"/></clipPath><circle cx="50" cy="50" r="50" fill="#777777"/><rect x="14" y="53" width="72" height="50" rx="20" fill="#fff" clip-path="url(#uc21)"/><circle cx="50" cy="36" r="27.5" fill="#777777"/><circle cx="50" cy="36" r="21" fill="#fff"/></svg>
<div class="t " style="left:1864.5px;top:309.24px;font-size:17.5px;line-height:21px;color:#777777;letter-spacing:0.29px;">icon will allow you</div>
<div class="t " style="left:1748px;top:333.54px;font-size:17.5px;line-height:21px;color:#777777;letter-spacing:0.47px;">to request this information from</div>
<div class="t " style="left:1748px;top:357.84px;font-size:17.5px;line-height:21px;color:#777777;letter-spacing:0.17px;">the candidate. When the icon</div>
<div class="t " style="left:1748px;top:382.14px;font-size:17.5px;line-height:21px;color:#777777;letter-spacing:0.22px;">turns green, the respective field</div>
<div class="t " style="left:1748px;top:406.44px;font-size:17.5px;line-height:21px;color:#777777;letter-spacing:0.22px;">will be available for the candidate</div>
<div class="t " style="left:1748px;top:430.74px;font-size:17.5px;line-height:21px;color:#777777;letter-spacing:0.42px;">to fill out in their Onboarding</div>
<div class="t " style="left:1748px;top:455.04px;font-size:17.5px;line-height:21px;color:#777777;letter-spacing:0.5px;">portal.</div>
</body></html>
